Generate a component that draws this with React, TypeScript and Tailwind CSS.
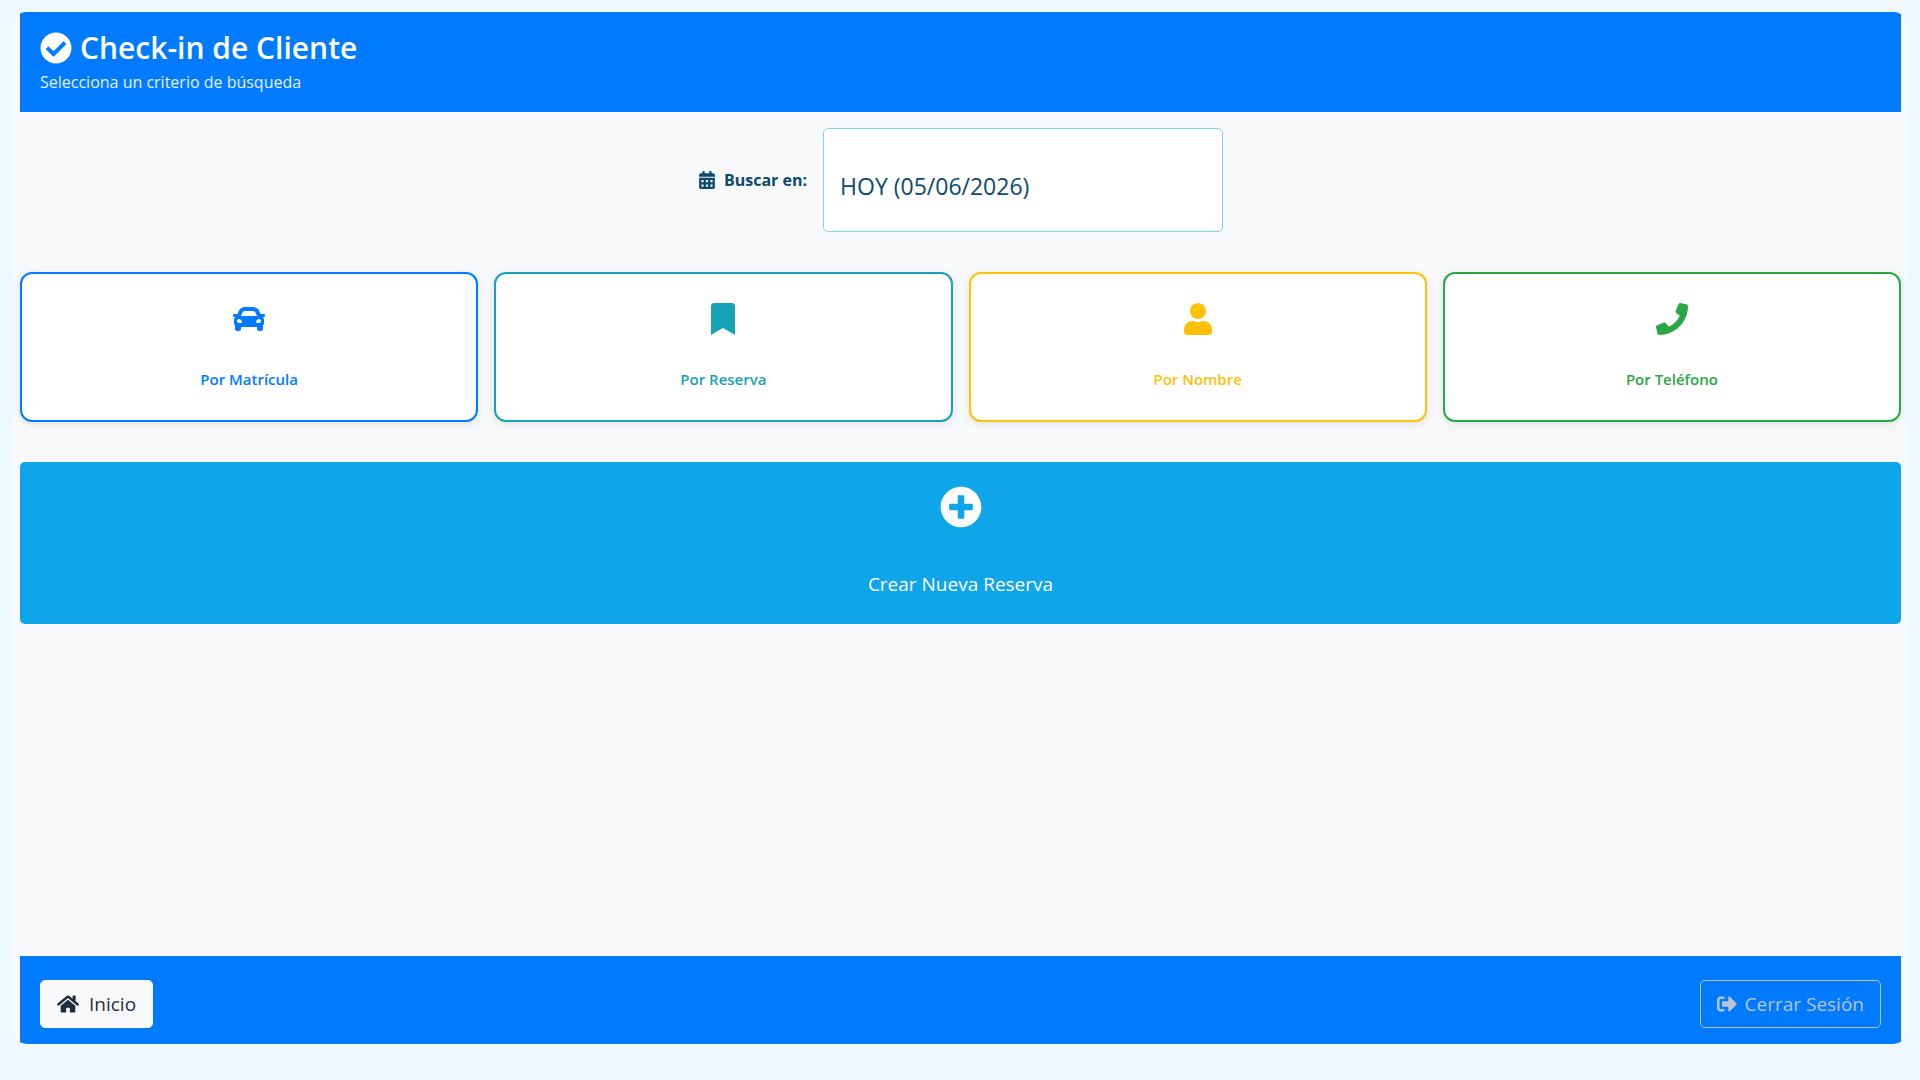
import {
  FaBookmark,
  FaCalendarAlt,
  FaCar,
  FaCheckCircle,
  FaHome,
  FaPhone,
  FaPlusCircle,
  FaSignOutAlt,
  FaUser,
} from 'react-icons/fa';

const criterios = [
  { label: 'Por Matrícula', Icon: FaCar, color: 'border-[#007bff] text-[#007bff]' },
  { label: 'Por Reserva', Icon: FaBookmark, color: 'border-[#17a2b8] text-[#17a2b8]' },
  { label: 'Por Nombre', Icon: FaUser, color: 'border-[#ffc107] text-[#ffc107]' },
  { label: 'Por Teléfono', Icon: FaPhone, color: 'border-[#28a745] text-[#28a745]' },
];

function Header() {
  return (
    <header className="bg-[#007bff] text-white px-5 py-4">
      <h1 className="flex items-center gap-2 text-[30px] leading-10 font-semibold">
        <FaCheckCircle className="size-8" />
        Check-in de Cliente
      </h1>
      <p className="text-base leading-7 text-white/90">Selecciona un criterio de búsqueda</p>
    </header>
  );
}

function SearchDate() {
  return (
    <div className="flex justify-center items-center gap-4 text-[#0c4a6e]">
      <label htmlFor="fecha" className="flex items-center gap-2 text-base font-bold">
        <FaCalendarAlt className="size-[18px]" />
        Buscar en:
      </label>
      <select
        id="fecha"
        className="appearance-none w-[400px] h-[104px] px-4 pt-3 bg-white border border-[#7dd3fc] rounded-[5px] text-[23px]"
      >
        <option>HOY (05/06/2026)</option>
      </select>
    </div>
  );
}

function Footer() {
  return (
    <footer className="flex justify-between bg-[#007bff] px-5 pt-6 pb-4 text-[19px]">
      <button className="flex items-center gap-2.5 h-12 px-4 rounded-[5px] border border-[#f8f9fa] bg-[#f8f9fa] text-[#1f2d3d]">
        <FaHome className="size-[22px]" />
        Inicio
      </button>
      <button className="flex items-center gap-2 h-12 px-4 rounded-[5px] border border-[#b8c4d0] text-[#b8c4d0]">
        <FaSignOutAlt className="size-5" />
        Cerrar Sesión
      </button>
    </footer>
  );
}

export default function App() {
  return (
    <div className="min-h-screen flex flex-col bg-[#f0f8ff] px-3 pt-3 pb-9 font-['Open_Sans','Noto_Sans',sans-serif]">
      <div className="flex-1 flex flex-col pl-2 pr-[7px] bg-[#f8f9fa] rounded-[15px] overflow-hidden">
        <Header />

        <main className="flex-1 pt-4">
          <SearchDate />

          {/* Criterios de búsqueda */}
          <div className="grid grid-cols-4 gap-4 mt-10">
            {criterios.map(({ label, Icon, color }) => (
              <button
                key={label}
                className={`flex flex-col items-center h-[150px] pt-[29px] bg-white border-2 rounded-xl shadow-[0_2px_8px_rgba(0,0,0,0.1)] ${color}`}
              >
                <Icon className="size-8" />
                <span className="mt-8 text-[15px] leading-6 font-semibold">{label}</span>
              </button>
            ))}
          </div>

          <button className="flex flex-col items-center w-full h-[162px] mt-10 pt-6 bg-[#0ea5e9] text-white rounded-[5px]">
            <FaPlusCircle className="size-[42px]" />
            <span className="mt-10 text-[19px] leading-8">Crear Nueva Reserva</span>
          </button>
        </main>

        <Footer />
      </div>
    </div>
  );
}
